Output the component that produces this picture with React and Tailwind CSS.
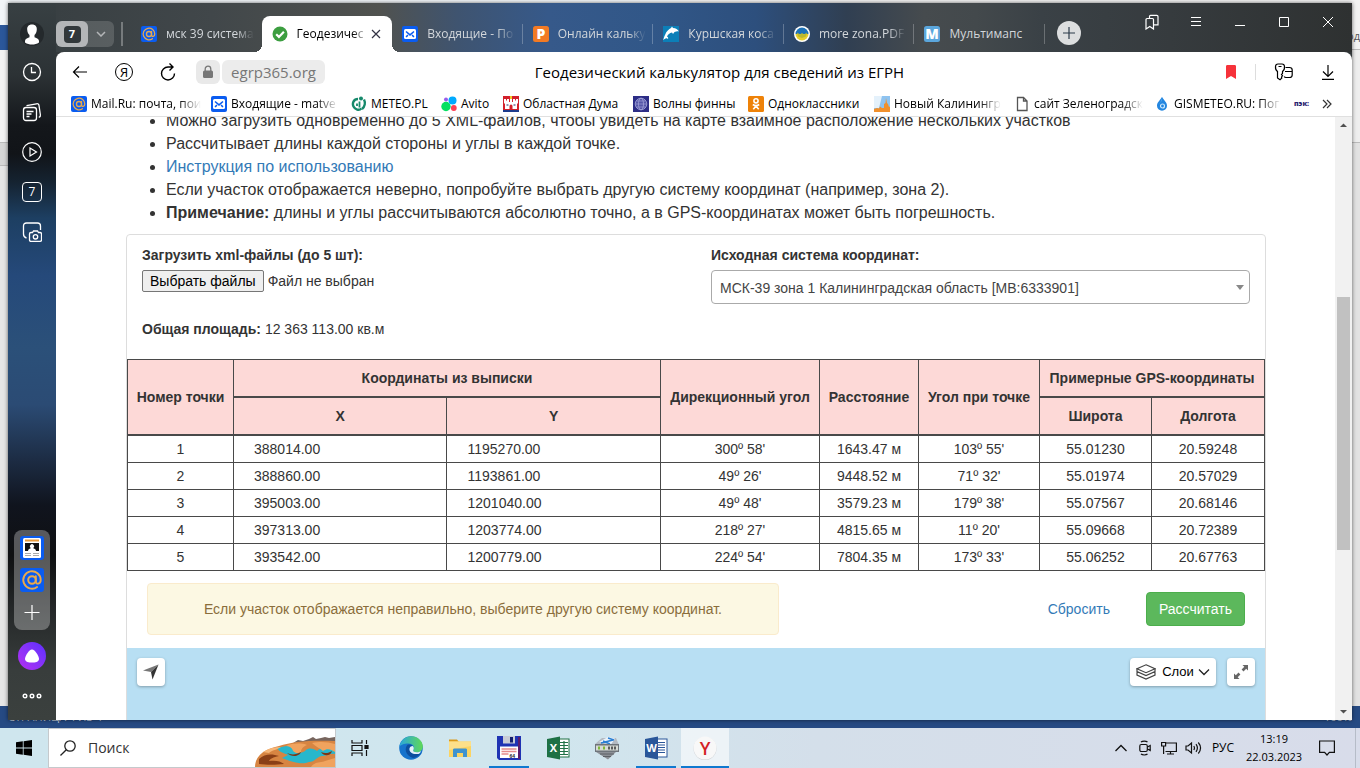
import { useRef, useState } from 'react';

const POINTS = [
  { id: 1, x: '388014.00', y: '1195270.00', dir: "300º 58'", dist: '1643.47 м', angle: "103º 55'", lat: '55.01230', lon: '20.59248' },
  { id: 2, x: '388860.00', y: '1193861.00', dir: "49º 26'", dist: '9448.52 м', angle: "71º 32'", lat: '55.01974', lon: '20.57029' },
  { id: 3, x: '395003.00', y: '1201040.00', dir: "49º 48'", dist: '3579.23 м', angle: "179º 38'", lat: '55.07567', lon: '20.68146' },
  { id: 4, x: '397313.00', y: '1203774.00', dir: "218º 27'", dist: '4815.65 м', angle: "11º 20'", lat: '55.09668', lon: '20.72389' },
  { id: 5, x: '393542.00', y: '1200779.00', dir: "224º 54'", dist: '7804.35 м', angle: "173º 33'", lat: '55.06252', lon: '20.67763' },
];

/* ---------- site icons ---------- */

function MailIcon({ className = 'size-4' }) {
  return (
    <svg viewBox="0 0 24 24" className={className} fill="none">
      <rect width="24" height="24" rx="3" fill="#0a5cf0" />
      <circle cx="12" cy="12" r="3.8" stroke="#e9a94c" strokeWidth="2" />
      <path d="M15.8 8.2v5.4c0 3.2 4.9 2.6 4.9-1.6a8.7 8.7 0 1 0-3.6 7" stroke="#e9a94c" strokeWidth="1.9" strokeLinecap="round" />
    </svg>
  );
}

function InboxIcon() {
  return (
    <svg viewBox="0 0 16 16" className="size-4 shrink-0" fill="none">
      <rect width="16" height="16" rx="2" fill="#0a5cf0" />
      <rect x="2" y="3" width="12" height="10" rx="1.5" fill="#fff" />
      <path d="M4 5.5l4 3.4 4-3.4M4 10.8l2-1.6M12 10.8l-2-1.6" stroke="#0a5cf0" strokeWidth="1.5" />
    </svg>
  );
}

function CheckIcon() {
  return (
    <svg viewBox="0 0 16 16" className="size-4 shrink-0" fill="none">
      <circle cx="8" cy="8" r="7.5" fill="#3c9e40" />
      <path d="M4.2 8.3l2.7 2.6 5-5.2" stroke="#fff" strokeWidth="2.2" />
    </svg>
  );
}

function LetterIcon({ letter, color }) {
  return (
    <svg viewBox="0 0 16 16" className="size-4 shrink-0">
      <rect width="16" height="16" rx="2.5" fill={color} />
      <text x="8" y="13" textAnchor="middle" fontSize="14" fontWeight="800" fontFamily="Open Sans" fill="#fff">{letter}</text>
    </svg>
  );
}

function DolphinIcon() {
  return (
    <svg viewBox="0 0 16 16" className="size-4 shrink-0">
      <rect width="16" height="16" fill="#0c7fb8" />
      <path d="M0 14c1-2 1-3 2-5C3.500 5 6 3 8 2l1-1.500 1 1.500c3 0 4.500 1.500 6 3.500-2-.5-3 .3-4.500.4L10 8 9 6.500C6.500 7 5 8.500 4 10.500c1 .5 1.500 1.500 1 2.500-1-1-2-1-5 1z" fill="#fff" />
    </svg>
  );
}

function ZonaIcon() {
  return (
    <svg viewBox="0 0 16 16" className="size-4 shrink-0">
      <circle cx="8" cy="8" r="8" fill="#fff" />
      <path d="M1.500 8a6.500 6.500 0 0 1 13 0z" fill="#1d72b8" />
      <path d="M1.500 8a6.500 6.500 0 0 0 13 0z" fill="#e8cf2a" />
      <path d="M3 6.500l3 2 2-1.500 2 1.500 3-2-1 4-4 1.500-4-1.500z" fill="#bcb82e" />
    </svg>
  );
}

function MeteoIcon() {
  return (
    <svg viewBox="0 0 16 16" className="size-4 shrink-0" fill="none" stroke="#16896b">
      <path d="M7 3C2.500 3 1 7.500 2.500 10.500S8 15 10.500 12.500" strokeWidth="2.400" />
      <path d="M13 3.500c1.500 3 1 7-2 9.500" strokeWidth="2.400" />
      <path d="M8.500 5.500v6M6 7.500v2.500" strokeWidth="1.800" />
      <circle cx="10" cy="2.500" r="2" fill="#16896b" stroke="none" />
    </svg>
  );
}

function AvitoIcon() {
  return (
    <svg viewBox="0 0 16 16" className="size-4 shrink-0">
      <circle cx="5" cy="10.500" r="4.700" fill="#04e061" />
      <circle cx="11.500" cy="4.500" r="4" fill="#00aaff" />
      <circle cx="12.800" cy="12" r="2.900" fill="#ff4053" />
      <circle cx="5" cy="3.500" r="2" fill="#965eeb" />
    </svg>
  );
}

function DumaIcon() {
  return (
    <svg viewBox="0 0 16 16" className="size-4 shrink-0">
      <rect width="16" height="16" fill="#d3202b" />
      <path d="M1 3h2v1.500h1V3h2v3h1V1h2v5h1V3h2v1.500h1V3h2v4l-1 1v5H2V8L1 7z" fill="#fff" />
      <rect x="7" y="0" width="2" height="3" fill="#f2c928" />
      <path d="M6.500 13v-3a1.500 1.500 0 0 1 3 0v3z" fill="#d3202b" />
      <path d="M0 14h16v2H0z" fill="#1c3b8c" />
      <path d="M3.500 9h2M10.500 9h2" stroke="#1c2c6b" />
    </svg>
  );
}

function WavesIcon() {
  return (
    <svg viewBox="0 0 16 16" className="size-4 shrink-0" fill="none">
      <rect width="16" height="16" fill="#2c2d86" />
      <circle cx="8" cy="8" r="5.800" fill="#5557a8" stroke="#a7a9dc" strokeWidth=".8" />
      <ellipse cx="8" cy="8" rx="2.500" ry="5.800" stroke="#a7a9dc" strokeWidth=".7" />
      <path d="M2.500 8h11M3.500 5h9M3.500 11h9" stroke="#a7a9dc" strokeWidth=".6" />
    </svg>
  );
}

function OkIcon() {
  return (
    <svg viewBox="0 0 16 16" className="size-4 shrink-0" fill="none" stroke="#fff" strokeWidth="1.600">
      <rect width="16" height="16" rx="1.500" fill="#ee8208" stroke="none" />
      <circle cx="8" cy="4.800" r="2.100" />
      <path d="M4.800 8.500c2 1.400 4.400 1.400 6.400 0M8 10l-2.700 3.200M8 10l2.700 3.200" />
    </svg>
  );
}

function KaliningradIcon() {
  return (
    <svg viewBox="0 0 16 16" className="size-4 shrink-0">
      <rect width="16" height="16" fill="#8ec3f0" />
      <path d="M0 0h8L5 12H0z" fill="#e4f1fb" />
      <path d="M0 13l3-1 2 .5 1-2 2 1.500h2V8l1.500-1L12 2l1 5 1 1 1 3 1-.5V16H0z" fill="#f0902c" />
    </svg>
  );
}

function PageIcon() {
  return (
    <svg viewBox="0 0 16 16" className="size-4 shrink-0" fill="none" stroke="#555" strokeWidth="1.300">
      <path d="M3.500 1.500h6l3.500 3.500v9.500H3.500zM9.500 1.500V5H13" />
    </svg>
  );
}

function DropIcon() {
  return (
    <svg viewBox="0 0 16 16" className="size-4 shrink-0" fill="none">
      <path d="M8 .8c1 3 5 5 5 9a5 5 0 0 1-10 0c0-4 4-6 5-9z" fill="#2386e0" />
      <path d="M8 3c.5 2-2.500 4-3.500 6 .5-2 3-3 3.500-6z" fill="#b5ddfa" />
      <circle cx="8.500" cy="10" r="2" stroke="#cbe8fc" strokeWidth="1.200" />
    </svg>
  );
}

/* ---------- browser sidebar ---------- */

function SideButton({ label, children }) {
  return (
    <button type="button" aria-label={label} className="flex h-10 w-full items-center justify-center">
      {children}
    </button>
  );
}

function Sidebar() {
  return (
    <aside className="flex w-12 shrink-0 flex-col items-center bg-[linear-gradient(180deg,#384043_0%,#2c3235_10%,#14171b_17%,#111418_21%,#152331_25%,#1d3f62_30%,#25497a_38%,#2b5079_48%,#2b4b74_56%,#1c2b42_64%,#10141e_70%,#0f1012_77%,#232627_84%,#383d3c_93%,#3b403e_100%)] pt-[13px] text-white">
      <button type="button" aria-label="Профиль" className="flex h-9 w-full items-center justify-center">
        <svg viewBox="0 0 24 24" className="size-6">
          <circle cx="12" cy="12" r="12" fill="#24292c" />
          <path d="M12 2.500c3.500 0 5 2.200 4.800 5-.1 2.400-.9 4.500-2.300 5.500v2.300c2.500 1 4.500 1.700 4.500 3.700v1.500c-2 1.500-4.500 2-7 2s-5-.5-7-2V19c0-2 2-2.700 4.500-3.700V13C8.100 12 7.300 9.900 7.200 7.500c-.2-2.800 1.300-5 4.800-5z" fill="#fff" />
        </svg>
      </button>
      <SideButton label="История">
        <svg viewBox="0 0 20 20" className="size-5" fill="none" stroke="currentColor" strokeWidth="1.300">
          <circle cx="10" cy="10" r="8.500" />
          <path d="M9.500 5v5.500H14" />
        </svg>
      </SideButton>
      <SideButton label="Коллекции">
        <svg viewBox="0 0 20 20" className="size-5" fill="none" stroke="currentColor" strokeWidth="1.300">
          <rect x="1.500" y="5.500" width="13" height="13" rx="2.500" />
          <path d="M4.500 9.500h7M4.500 12h5M4.500 14.500h3M4.500 3.700l10-1.900c1.500-.3 2.300.3 2.500 1.700l1.400 9.500c.2 1.300-.4 2-1.600 2.300" />
        </svg>
      </SideButton>
      <SideButton label="Видео">
        <svg viewBox="0 0 20 20" className="size-5" fill="none" stroke="currentColor" strokeWidth="1.200">
          <circle cx="10" cy="10" r="9.300" />
          <path d="M8 6v8l6.500-4z" />
        </svg>
      </SideButton>
      <SideButton label="Вкладки">
        <span className="flex size-5 items-center justify-center rounded border border-white text-xs">7</span>
      </SideButton>
      <SideButton label="Скриншот">
        <svg viewBox="0 0 20 20" className="size-5" fill="none" stroke="currentColor" strokeWidth="1.300">
          <path d="M4.500 16C2.500 15.500 1.500 14 1.500 12V4c0-2 1-3 3-3h11c2 0 3 1 3 3v4" />
          <path d="M7.500 12c0-1 .5-1.500 1.500-1.500h1.500L11.500 9h4l1 1.500H18c1 0 1.500.5 1.500 1.500v6c0 .8-.5 1.300-1.500 1.300H9c-1 0-1.500-.5-1.500-1.300z" />
          <circle cx="13.500" cy="14.800" r="2.200" />
        </svg>
      </SideButton>

      <div className="mt-auto mb-1.5 flex w-9 flex-col items-center gap-2 rounded-lg bg-white/30 py-1.5">
        <a href="#news" aria-label="Новости">
          <svg viewBox="0 0 24 24" className="size-6">
            <rect width="24" height="24" rx="3" fill="#0a5cf0" />
            <rect x="3" y="2" width="18" height="20" rx="1.500" fill="#fff" />
            <path d="M5 4.500h14" stroke="#e99b3c" strokeWidth="2" />
            <path d="M5 7h14v8H5z" fill="#111" />
            <path d="M8 15c0-2 2-2.500 3-3a2 2 0 1 1 2 0c1 .5 3 1 3 3z" fill="#fff" />
            <path d="M5 17.500h6M13 17.500h6M5 19.500h6M13 19.500h6" stroke="#aaa" />
          </svg>
        </a>
        <a href="#mail" aria-label="Почта">
          <MailIcon className="size-6" />
        </a>
        <button type="button" aria-label="Добавить">
          <svg viewBox="0 0 24 24" className="size-6" stroke="currentColor" strokeWidth="1.200">
            <path d="M4.500 12.500h15M12 5v15" />
          </svg>
        </button>
      </div>
      <SideButton label="Алиса">
        <span className="flex size-7 items-center justify-center rounded-full bg-linear-to-tr from-[#b52bf2] to-[#5b2cff]">
          <svg viewBox="0 0 16 16" className="size-4" fill="#fff">
            <path d="M8 1.500c3 0 7 6.500 7 9.500S11 14.500 8 14.500 1 14 1 11s4-9.500 7-9.500z" />
          </svg>
        </span>
      </SideButton>
      <SideButton label="Ещё">
        <svg viewBox="0 0 20 8" className="h-2 w-5" fill="none" stroke="currentColor" strokeWidth="1.400">
          <circle cx="3" cy="4" r="1.800" />
          <circle cx="10" cy="4" r="1.800" />
          <circle cx="17" cy="4" r="1.800" />
        </svg>
      </SideButton>
      <div className="h-1 shrink-0" />
    </aside>
  );
}

/* ---------- tabs, toolbar, bookmarks ---------- */

const FADE = '[mask-image:linear-gradient(90deg,#000_80%,transparent)]';

function Tab({ icon, title, fade = true, last }) {
  return (
    <a href="#tab" className="relative flex min-w-0 flex-1 items-center gap-[9px] pr-2 pl-2.5 text-[#d3d7db]">
      {icon}
      <span className={`flex-1 whitespace-nowrap ${fade ? FADE : ''}`}>{title}</span>
      {!last && <span className="absolute top-2 right-0 h-5 w-px bg-white/25" />}
    </a>
  );
}

function TitleBar() {
  return (
    <header className="flex h-[49px] shrink-0 items-start bg-[linear-gradient(90deg,#394043_0%,#41474a_12%,#50524f_25%,#3f5470_31%,#36598a_38%,#315788_46%,#2d4f7d_54%,#303f52_61%,#464b4e_67%,#43494c_71%,#3a4146_76%,#363b3e_86%,#2e3131_100%)]">
      <div className="mt-[18px] flex h-[26px] w-[58px] shrink-0 rounded-md bg-white/15">
        <button type="button" aria-label="Группа вкладок" className="flex w-8 items-center justify-center rounded-md bg-[#b4b6b8]">
          <span className="flex size-[17px] items-center justify-center rounded bg-[#32383b] text-[11px] font-bold text-white">7</span>
        </button>
        <button type="button" aria-label="Список групп" className="flex flex-1 items-center justify-center text-[#b4b6b8]">
          <svg viewBox="0 0 10 6" className="h-1.5 w-2.5" fill="none" stroke="currentColor" strokeWidth="1.500">
            <path d="M1 1l4 4 4-4" />
          </svg>
        </button>
      </div>
      <span className="mt-[19px] ml-[7px] h-6 w-0.5 bg-white/30" />
      <nav className="mt-[13px] ml-2 flex h-9 w-[914px] text-xs">
        <Tab icon={<MailIcon className="size-4 shrink-0" />} title="мск 39 система" last />
        <div className="relative flex min-w-0 flex-1 items-center gap-[9px] rounded-t-lg bg-white pr-2 pl-2.5 text-black">
          <span className="absolute bottom-0 -left-2 size-2 bg-[radial-gradient(circle_at_0_0,transparent_8px,#fff_8px)]" />
          <span className="absolute -right-2 bottom-0 size-2 bg-[radial-gradient(circle_at_100%_0,transparent_8px,#fff_8px)]" />
          <CheckIcon />
          <a href="#tab" className={`flex-1 whitespace-nowrap ${FADE}`}>Геодезичес</a>
          <button type="button" aria-label="Закрыть вкладку" className="-ml-2">
            <svg viewBox="0 0 16 16" className="size-4" stroke="#334" strokeWidth="1.200">
              <path d="M4 4l8 8M12 4l-8 8" />
            </svg>
          </button>
        </div>
        <Tab icon={<InboxIcon />} title="Входящие - По" />
        <Tab icon={<LetterIcon letter="P" color="#f27a24" />} title="Онлайн кальку" />
        <Tab icon={<DolphinIcon />} title="Куршская коса" />
        <Tab icon={<ZonaIcon />} title="more zona.PDF" />
        <Tab icon={<LetterIcon letter="M" color="#5ba6dc" />} title="Мультимапс" fade={false} />
      </nav>
      <button type="button" aria-label="Новая вкладка" className="mt-[18px] ml-3 flex size-6 items-center justify-center rounded-full bg-[#dcdedf]">
        <svg viewBox="0 0 12 12" className="size-3" stroke="#2b3a4a" strokeWidth="1.200">
          <path d="M0 6h12M6 0v12" />
        </svg>
      </button>
      <div className="mr-0.5 ml-auto flex h-[38px] text-white">
        <button type="button" aria-label="Панель закладок" className="flex w-11 items-center justify-center">
          <svg viewBox="0 0 14 16" className="h-4 w-3.5" fill="none" stroke="currentColor" strokeWidth="1.200">
            <path d="M1 5.500c0-.8.400-1 1-1h5.500c.7 0 1 .3 1 1V15l-3.700-2.500L1 15zM4.500 4.500V2.500c0-.8.300-1.200 1-1.200h6.300c.8 0 1.200.4 1.200 1.200v8.300H8.500" />
          </svg>
        </button>
        <button type="button" aria-label="Меню" className="flex w-11 items-center justify-center">
          <svg viewBox="0 0 10 10" className="size-2.5" stroke="currentColor"><path d="M0 .5h10M0 4.500h10M0 8.500h10" /></svg>
        </button>
        <button type="button" aria-label="Свернуть" className="flex w-11 items-center justify-center">
          <svg viewBox="0 0 10 10" className="size-2.5" stroke="currentColor"><path d="M0 8.500h10" /></svg>
        </button>
        <button type="button" aria-label="Развернуть" className="flex w-11 items-center justify-center">
          <svg viewBox="0 0 10 10" className="size-2.5" fill="none" stroke="currentColor"><path d="M.5.5h9v9h-9z" /></svg>
        </button>
        <button type="button" aria-label="Закрыть" className="flex w-11 items-center justify-center">
          <svg viewBox="0 0 10 10" className="size-2.5" stroke="currentColor"><path d="M0 0l10 10M10 0L0 10" /></svg>
        </button>
      </div>
    </header>
  );
}

function Toolbar() {
  return (
    <div className="flex h-10 shrink-0 items-center px-0.5 text-black">
      <button type="button" aria-label="Назад" className="flex w-11 justify-center">
        <svg viewBox="0 0 16 16" className="size-4" fill="none" stroke="currentColor" strokeWidth="1.200">
          <path d="M1.500 8h13.500M7 2.500L1.500 8 7 13.500" />
        </svg>
      </button>
      <button type="button" aria-label="Яндекс" className="flex w-11 justify-center">
        <span className="flex size-[18px] items-center justify-center rounded-full border border-black text-[13px] leading-none">Я</span>
      </button>
      <button type="button" aria-label="Обновить" className="flex w-11 justify-center">
        <svg viewBox="0 0 16 18" className="h-[18px] w-4" fill="none" stroke="currentColor" strokeWidth="1.400">
          <path d="M14.500 10.500A6.500 6.500 0 1 1 8 4h4.500M9.500.5L13 4 9.500 7.500" />
        </svg>
      </button>
      <div className="ml-1.5 flex gap-0.5">
        <span className="flex h-6 w-6 items-center justify-center rounded-md bg-[#e9e9e9]">
          <svg viewBox="0 0 12 14" className="h-3.5 w-3" fill="none">
            <path d="M3.200 6V4a2.800 2.800 0 0 1 5.600 0v2" stroke="#777" strokeWidth="1.300" />
            <rect x="1" y="5.500" width="10" height="7.500" rx="1.500" fill="#777" />
          </svg>
        </span>
        <button type="button" className="h-6 w-[103px] rounded-md bg-[#ececec] text-center text-[15px] leading-6 text-[#777]">egrp365.org</button>
      </div>
      <div className="mr-28 flex-1 overflow-hidden text-center text-[15px] whitespace-nowrap">
        Геодезический калькулятор для сведений из ЕГРН
      </div>
      <button type="button" aria-label="В закладках">
        <svg viewBox="0 0 10 14" className="h-3.5 w-2.5" fill="#f6323a">
          <path d="M0 1.500C0 .5.5 0 1.500 0h7C9.500 0 10 .5 10 1.500V14l-5-3-5 3z" />
        </svg>
      </button>
      <span className="ml-[19px] h-4 w-px bg-[#ddd]" />
      <button type="button" aria-label="Пароли и карты" className="ml-1.5 flex w-11 justify-center">
        <svg viewBox="0 0 20 18" className="h-[18px] w-5" fill="none" stroke="currentColor" strokeWidth="1.200">
          <path d="M3.500 8.500C1.800 7.300 1.300 5.500 1.500 3.500 1.600 1.700 2.300 1 4 1h4c1.700 0 2.400.7 2.500 2.500.2 2-.3 3.800-2 5v2l-1 1 1 1.200-1 1.300.3 1L6 16.800 3.500 15z" />
          <path d="M4.500 3.500h3M11.500 4.500h4c1.800 0 2.700.8 2.700 2.500v5c0 1.700-.9 2.500-2.700 2.500h-3.500c-1 0-1.500-.3-1.800-1M11 8.500h7" />
        </svg>
      </button>
      <button type="button" aria-label="Загрузки" className="flex w-11 justify-center">
        <svg viewBox="0 0 14 16" className="h-4 w-3.5" fill="none" stroke="currentColor" strokeWidth="1.200">
          <path d="M7 1v11M2 7.500L7 12.500l5-5M1 15.400h12" />
        </svg>
      </button>
    </div>
  );
}

function Bookmark({ icon, title, width, fade }) {
  return (
    <a href="#bookmark" className={`flex shrink-0 items-center gap-1 ${width}`}>
      {icon}
      <span className={`flex-1 whitespace-nowrap ${fade ? FADE : ''}`}>{title}</span>
    </a>
  );
}

function BookmarksBar() {
  return (
    <nav className="flex h-[25px] shrink-0 items-center gap-[13px] overflow-hidden border-b border-[#e0e0e0] pl-[15px] text-xs text-black">
      <Bookmark icon={<MailIcon className="size-4 shrink-0" />} title="Mail.Ru: почта, пои" width="w-[127px]" fade />
      <Bookmark icon={<InboxIcon />} title="Входящие - matve" width="w-[127px]" fade />
      <Bookmark icon={<MeteoIcon />} title="METEO.PL" width="w-[77px]" />
      <Bookmark icon={<AvitoIcon />} title="Avito" width="w-[49px]" />
      <Bookmark icon={<DumaIcon />} title="Областная Дума" width="w-[117px]" />
      <Bookmark icon={<WavesIcon />} title="Волны финны" width="w-[102px]" />
      <Bookmark icon={<OkIcon />} title="Одноклассники" width="w-[113px]" />
      <Bookmark icon={<KaliningradIcon />} title="Новый Калинингр" width="w-[127px]" fade />
      <Bookmark icon={<PageIcon />} title="сайт Зеленоградск" width="w-[127px]" fade />
      <Bookmark icon={<DropIcon />} title="GISMETEO.RU: Пог" width="w-[127px]" fade />
      <a href="#bookmark" className="text-[7px] font-extrabold text-[#2a2470]">пэк:</a>
      <button type="button" aria-label="Все закладки">
        <svg viewBox="0 0 10 10" className="size-2.5" fill="none" stroke="#333" strokeWidth="1.200">
          <path d="M1 1l4 4-4 4M5 1l4 4-4 4" />
        </svg>
      </button>
    </nav>
  );
}

/* ---------- calculator page ---------- */

function UploadForm() {
  const inputRef = useRef(null);
  const [fileName, setFileName] = useState('');

  return (
    <div className="grid grid-cols-2 pt-2.5">
      <div className="px-[15px]">
        <label htmlFor="files" className="block font-bold">Загрузить xml-файлы (до 5 шт):</label>
        <input
          id="files"
          ref={inputRef}
          type="file"
          multiple
          className="hidden"
          onChange={(e) => setFileName(e.target.files[0]?.name || '')}
        />
        <div className="mt-[5px] flex items-center gap-1">
          <button
            type="button"
            onClick={() => inputRef.current.click()}
            className="h-[22px] rounded-xs border border-[#767676] bg-[#efefef] px-[7px] leading-5 text-black"
          >
            Выбрать файлы
          </button>
          <span>{fileName || 'Файл не выбран'}</span>
        </div>
      </div>
      <div className="px-[15px]">
        <label htmlFor="system" className="block font-bold">Исходная система координат:</label>
        <div className="relative mt-[5px]">
          <select id="system" className="h-[34px] w-full appearance-none rounded border border-[#aaa] bg-white px-2 pt-0.5 text-[#444]">
            <option>МСК-39 зона 1 Калининградская область [МВ:6333901]</option>
            <option>МСК-39 зона 2 Калининградская область</option>
          </select>
          <svg viewBox="0 0 8 5" className="pointer-events-none absolute top-[15px] right-1.5 h-[5px] w-2" fill="#888">
            <path d="M0 0h8L4 5z" />
          </svg>
        </div>
      </div>
    </div>
  );
}

function PointsTable() {
  const head = 'border border-[#494949] px-0 py-2 font-bold';
  const sub = 'border border-t-2 border-[#494949] px-0 py-2 font-bold';
  const cell = 'border border-[#494949] py-[3px] text-center';
  return (
    <table className="w-full table-fixed border-collapse leading-5">
      <colgroup>
        <col className="w-[106px]" />
        <col />
        <col />
        <col className="w-[159px]" />
        <col className="w-[99px]" />
        <col className="w-[121px]" />
        <col className="w-[112px]" />
        <col className="w-[113px]" />
      </colgroup>
      <thead className="border-b-2 border-[#494949] bg-[#fdd9d7]">
        <tr>
          <th rowSpan={2} className={head}>Номер точки</th>
          <th colSpan={2} className={head}>Координаты из выписки</th>
          <th rowSpan={2} className={head}>Дирекционный угол</th>
          <th rowSpan={2} className={head}>Расстояние</th>
          <th rowSpan={2} className={head}>Угол при точке</th>
          <th colSpan={2} className={head}>Примерные GPS-координаты</th>
        </tr>
        <tr>
          <th className={sub}>X</th>
          <th className={sub}>Y</th>
          <th className={sub}>Широта</th>
          <th className={sub}>Долгота</th>
        </tr>
      </thead>
      <tbody>
        {POINTS.map((p) => (
          <tr key={p.id}>
            <td className={cell}>{p.id}</td>
            <td className="border border-[#494949] py-[3px] pl-5">{p.x}</td>
            <td className="border border-[#494949] py-[3px] pl-5">{p.y}</td>
            <td className={cell}>{p.dir}</td>
            <td className={cell}>{p.dist}</td>
            <td className={cell}>{p.angle}</td>
            <td className={cell}>{p.lat}</td>
            <td className={cell}>{p.lon}</td>
          </tr>
        ))}
      </tbody>
    </table>
  );
}

function MapView() {
  const control = 'flex h-7 items-center justify-center rounded-sm bg-white shadow-[0_1px_3px_rgba(0,0,0,0.3)]';
  return (
    <div className="flex h-[450px] items-start bg-[#b8dff3] p-2.5">
      <button type="button" aria-label="Моё местоположение" className={`w-7 ${control}`}>
        <svg viewBox="0 0 16 16" className="size-4">
          <path d="M15.500.5L0 6.500l8 1.500z" fill="#777" />
          <path d="M15.500.5L8 8l1.500 7.500z" fill="#333" />
        </svg>
      </button>
      <button type="button" className={`ml-auto w-[86px] gap-1 text-[13px] text-black ${control}`}>
        <svg viewBox="0 0 20 16" className="mr-0.5 h-4 w-5" fill="none" stroke="#444" strokeWidth="1.200">
          <path d="M10 .8l9 3.900-9 4-9-4z" />
          <path d="M1 4.700v2.800l9 4 9-4V4.700M1 8.200v2.800l9 4 9-4V8.200" />
        </svg>
        Слои
        <svg viewBox="0 0 12 8" className="h-2 w-3" fill="none" stroke="#222" strokeWidth="1.300">
          <path d="M1 1.500l5 5 5-5" />
        </svg>
      </button>
      <button type="button" aria-label="На весь экран" className={`ml-[11px] w-7 ${control}`}>
        <svg viewBox="0 0 14 14" className="size-3.5" fill="#666">
          <path d="M8.500 0H14v5.500l-1.800-1.800-2.700 2.700-1.900-1.900 2.700-2.700zM5.500 14H0V8.500l1.800 1.800 2.700-2.700 1.900 1.900-2.700 2.700z" />
        </svg>
      </button>
    </div>
  );
}

function Page() {
  return (
    <div className="flex min-h-0 flex-1 overflow-hidden">
      <main className="min-w-0 flex-1 overflow-hidden bg-white pr-[69px] pl-[70px] font-['Liberation_Sans',Arial,sans-serif] text-sm leading-5 text-[#333]">
        <ul className="-mt-2 mb-2.5 list-disc pl-10 text-base leading-[23px]">
          <li>Можно загрузить одновременно до 5 XML-файлов, чтобы увидеть на карте взаимное расположение нескольких участков</li>
          <li>Рассчитывает длины каждой стороны и углы в каждой точке.</li>
          <li><a href="#help" className="text-[#337ab7]">Инструкция по использованию</a></li>
          <li>Если участок отображается неверно, попробуйте выбрать другую систему координат (например, зона 2).</li>
          <li><b>Примечание:</b> длины и углы рассчитываются абсолютно точно, а в GPS-координатах может быть погрешность.</li>
        </ul>
        <section className="rounded border border-[#ddd]">
          <UploadForm />
          <p className="mt-[15px] mb-5 px-[15px]"><b>Общая площадь:</b> 12 363 113.00 кв.м</p>
          <PointsTable />
          <div className="mt-3 mb-[13px] grid grid-cols-12 items-center">
            <div className="col-span-7 pr-3 pl-5">
              <div className="rounded border border-[#faebcc] bg-[#fcf8e3] p-[15px] text-center text-[#8a6d3b]">
                Если участок отображается неправильно, выберите другую систему координат.
              </div>
            </div>
            <div className="col-span-5 flex items-center justify-end gap-9 pr-5">
              <button type="reset" className="text-[#337ab7]">Сбросить</button>
              <button type="submit" className="h-[34px] rounded border border-[#4cae4c] bg-[#5cb85c] px-3 text-white">Рассчитать</button>
            </div>
          </div>
          <MapView />
        </section>
      </main>
      <div className="flex w-[17px] shrink-0 flex-col items-center bg-[#f1f1f1]">
        <svg viewBox="0 0 17 17" className="size-[17px]" fill="#505050"><path d="M5 10h7L8.500 6.500z" /></svg>
        <div className="flex w-full flex-1 flex-col items-center">
          <div className="grow-[163]" />
          <div className="w-[13px] grow-[253] bg-[#c1c1c1]" />
          <div className="grow-[153]" />
        </div>
        <svg viewBox="0 0 17 17" className="size-[17px]" fill="#505050"><path d="M5 7h7l-3.500 3.500z" /></svg>
      </div>
    </div>
  );
}

/* ---------- desktop ---------- */

function Backdrop() {
  return (
    <div className="absolute inset-0 flex flex-col bg-[#e6e6e6] text-[11px] text-[#555]">
      <div className="flex min-h-0 flex-1">
        <div className="flex flex-1 flex-col">
          <div className="h-[25px] bg-[#f2f6f9]" />
          <div className="h-[25px] bg-[#2b579a]" />
          <div className="h-[92px] bg-[#f3f3f3]" />
          <div className="h-6 border-y border-[#bbb] bg-[#d6d6d6]" />
        </div>
        <div className="flex flex-1 flex-col items-end">
          <div className="h-[50px] w-full border-b border-[#bbb] bg-[#f3f3f3] pt-7 text-right">Вход</div>
          <div className="h-[93px] w-full border-b border-[#bbb] bg-[#eee]" />
          <div className="w-full flex-1 bg-[#e2e2e2]" />
        </div>
      </div>
      <div className="flex h-[22px] items-center justify-between bg-[#264a83] px-2 text-[#c3cee0]">
        <span>СТРАНИЦА 4 ИЗ 4</span>
        <span>100%</span>
      </div>
    </div>
  );
}

function TaskButton({ label, open, active, children }) {
  return (
    <button
      type="button"
      aria-label={label}
      className={`flex w-12 flex-col items-center ${active ? 'bg-white/60' : ''}`}
    >
      <span className="flex flex-1 items-center pt-0.5">{children}</span>
      <span className={`h-0.5 ${active ? 'w-full' : 'w-10'} ${open ? 'bg-[#0f79d0]' : ''}`} />
    </button>
  );
}

function OfficeIcon({ letter, color, sheet }) {
  return (
    <svg viewBox="0 0 24 24" className="size-6">
      <rect x="12" y="3" width="11" height="18" fill="#fff" stroke={color} />
      {sheet
        ? <path d="M14 6.500h8M14 9.500h8M14 12.500h8M14 15.500h8M14 18.500h8M18 5v14" stroke={color} strokeWidth="1.200" />
        : <path d="M14 6.500h7M14 9h7M14 11.500h7M14 14h7M14 16.500h7" stroke={color} strokeWidth="1.200" />}
      <path d="M1 3l13-2.500v23L1 21z" fill={color} />
      <text x="7.500" y="16" textAnchor="middle" fontSize="11" fontWeight="700" fontFamily="Open Sans" fill="#fff">{letter}</text>
    </svg>
  );
}

function Taskbar() {
  return (
    <footer className="flex h-10 shrink-0 bg-[linear-gradient(90deg,#cfe6ee_0%,#d0e6ee_40%,#d4dfea_60%,#d8dcea_100%)] text-black">
      <button type="button" aria-label="Пуск" className="flex w-12 items-center justify-center">
        <svg viewBox="0 0 16 16" className="size-4">
          <path d="M0 2.300l6.800-1v6.300H0zM7.600 1.200L16 0v7.600H7.600zM0 8.400h6.800v6.300l-6.800-1zM7.600 8.400H16V16l-8.400-1.200z" />
        </svg>
      </button>
      <form className="flex w-72 items-center overflow-hidden border border-[#c5c9cc] bg-white pl-[11px]">
        <svg viewBox="0 0 16 16" className="size-4 shrink-0" fill="none" stroke="#222" strokeWidth="1.300">
          <circle cx="10" cy="6" r="5.200" />
          <path d="M6.300 9.700L.5 15.500" />
        </svg>
        <input type="search" aria-label="Поиск" placeholder="Поиск" className="ml-3 min-w-0 flex-1 bg-transparent text-sm outline-none placeholder:text-[#333]" />
        <svg viewBox="0 0 80 30" className="h-[30px] w-20 shrink-0 self-end">
          <path d="M38 6l5-3 5 1 6-2 4-2 3 2 5-1 4-1 4 1 6-1v8c-14-2-28-3-42-2z" fill="#77655e" />
          <path d="M0 30C0 19 9 12 24 9c14-5 34-6 56-5v26z" fill="#d78542" />
          <path d="M22 11c8-2 14-3 22-3l-3 6c3 3 7 2 10-1 4-3 8-1 11 1 4-4 8-4 18-2v5c-5-1-8 2-12 2-5-1-8 6-14 6-7 3-14 0-19-1l-8-3 6-3c-4-2-9-3-11-7z" fill="#27b7cc" />
          <path d="M31 9c6-3 16-3 21-1-5 2-6 5-6 7-3 2-6 1-8-1 0-2-3-5-7-5zM57 6c9-2 16-1 23 1v8c-4-3-8-4-12-1-3-3-7-4-11-8z" fill="#f0a35e" />
          <path d="M4 22c6-6 14-5 20-3-6 1-9 3-10 5 6-1 12 0 15 3-8 1-18 1-25 0z" fill="#8a3f16" />
          <path d="M8 15c6-4 12-5 18-5-4 3-9 3-12 6z" fill="#f5b577" />
          <path d="M32 16c4 2 9 2 14-1-1 4-9 6-14 1zM66 15c4 2 8 1 11-1-1 5-8 6-11 1z" fill="#7b3715" />
          <path d="M56 30c4-6 10-4 14-6l10-3v9z" fill="#f0a35e" />
        </svg>
      </form>
      <TaskButton label="Представление задач">
        <svg viewBox="0 0 18 18" className="size-[18px]" fill="none" stroke="#111" strokeWidth="1.200">
          <path d="M1 1v3h10V1M1 17v-3h10v3M1 6.500h10v5H1zM15.500 1v4M15.500 11v6" />
          <path d="M14 6.500h3v3h-3z" fill="#111" />
        </svg>
      </TaskButton>
      <div className="ml-[3px] flex gap-px">
        <TaskButton label="Edge">
          <svg viewBox="0 0 24 24" className="size-6">
            <defs>
              <linearGradient id="edgeTop" x1="0" x2="1"><stop offset="0" stopColor="#2aa6dd" /><stop offset="1" stopColor="#5fd957" /></linearGradient>
            </defs>
            <circle cx="12" cy="12" r="11.800" fill="#1673cc" />
            <path d="M.3 11C1.500 4 6.500.2 12 .2c7 0 11.800 5 11.800 10 0 4-3 6-6 6s-4.300-1.200-3.500-2.300c2-3-.5-6.400-5-6.400C5 7.500 1.500 9 .3 11z" fill="url(#edgeTop)" />
            <path d="M9 8.500c-4 3-3 11 5 13.500 3-.3 6-2 8-5-7 3-12.500-1-11.500-4.500.6-1.800 2-2.500 3.300-2.500-1-1.300-3-1.800-4.800-1.500z" fill="#0d4f9e" />
            <path d="M14.300 13.900c-.8 1.100.5 2.300 3.500 2.300 1.500 0 3-.5 4-1.300-.2 2-1.500 3-3.500 3.200-5 .3-8.300-2.200-7.800-5.600.4-1.800 2-2.500 3.300-2.500 1.200 1.200 1.300 2.700.5 3.900z" fill="#e4f1f6" />
          </svg>
        </TaskButton>
        <TaskButton label="Проводник">
          <svg viewBox="0 0 22 20" className="h-5 w-[22px]">
            <path d="M0 1.500h8l2 2.500H0z" fill="#d99a1c" />
            <path d="M0 3.500h22V19H0z" fill="#fcd462" />
            <path d="M0 3.500h22V8L0 12z" fill="#fde08a" />
            <path d="M4 19v-7c0-1 .5-1.500 1.500-1.500h11c1 0 1.500.5 1.500 1.500v7h-4v-4H8v4z" fill="#3f93cf" />
          </svg>
        </TaskButton>
        <TaskButton label="Сохранение" open>
          <svg viewBox="0 0 24 24" className="size-6">
            <path d="M0 0h24v24H2l-2-2z" fill="#1f33b3" />
            <path d="M21 1h2v22h-2z" fill="#5a1d6e" />
            <path d="M6 0h12v7.500H6z" fill="#c8ccd6" />
            <path d="M13 1h3v5.500h-3z" fill="#13206e" />
            <path d="M3 10.500h18V22H3z" fill="#fff" />
            <path d="M4.500 13h15M4.500 15.500h15M4.500 18h7" stroke="#e58b8b" strokeWidth="1.300" />
            <text x="12.500" y="21.500" fontSize="5" fontWeight="700" fontFamily="Liberation Sans" fill="#222">64</text>
          </svg>
        </TaskButton>
        <TaskButton label="Excel"><OfficeIcon letter="X" color="#1e7145" sheet /></TaskButton>
        <TaskButton label="Сканер">
          <svg viewBox="0 0 24 24" className="size-6">
            <path d="M1 16l8-2 13 1-9 8.500z" fill="#8c9096" />
            <path d="M0 8l7-6h14l3 7-10 3z" fill="#b4bac2" />
            <path d="M4 6l9-5 7 1.500-4 6z" fill="#e9f2fb" />
            <path d="M8 5l7 3M13 2l6 2M6 7l12-3" stroke="#2a7fd4" strokeWidth="1.400" />
            <path d="M0 8h24v8H0z" fill="#6f757b" />
            <path d="M1 9.500h22v5H1z" fill="#d7dbd5" />
            <path d="M3 10.500h2v3H3zM8 10.500h2v3H8z" fill="#7fb83a" />
            <path d="M14 10.500v3M17 10.500v3M20 10.500v3" stroke="#333" strokeWidth="1.500" />
            <path d="M5 18h14M8 20.500h8" stroke="#5d6166" />
          </svg>
        </TaskButton>
        <TaskButton label="Word" open><OfficeIcon letter="W" color="#2a5699" /></TaskButton>
        <TaskButton label="Яндекс Браузер" open active>
          <svg viewBox="0 0 24 24" className="size-6">
            <circle cx="12" cy="12.500" r="11.500" fill="#c9ccd0" />
            <circle cx="12" cy="12" r="11.500" fill="#f8f8f8" />
            <text x="12" y="18.500" textAnchor="middle" fontSize="18" fontWeight="600" fontFamily="Open Sans" fill="#d41f26">Y</text>
          </svg>
        </TaskButton>
      </div>

      <div className="ml-auto flex items-center">
        <button type="button" aria-label="Скрытые значки" className="flex w-6 justify-center">
          <svg viewBox="0 0 12 8" className="h-2 w-3" fill="none" stroke="#111" strokeWidth="1.300"><path d="M.5 7L6 1.500 11.500 7" /></svg>
        </button>
        <button type="button" aria-label="Камера" className="flex w-6 justify-center">
          <svg viewBox="0 0 12 16" className="h-4 w-3" fill="none" stroke="#111" strokeWidth="1.200">
            <rect x=".8" y="4.500" width="7.500" height="7" rx="1.500" />
            <path d="M8.500 7l2.700-1.500v5L8.500 9M2 2c1.500-1.300 5-1.300 6.500 0M2 14c1.500 1.300 5 1.300 6.500 0" />
          </svg>
        </button>
        <button type="button" aria-label="Сеть" className="flex w-6 justify-center">
          <svg viewBox="0 0 16 14" className="h-3.5 w-4" fill="none" stroke="#111" strokeWidth="1.200">
            <path d="M5 2h10.400v8.500H4.500M.6 1.500h4v3.500h-4zM2.600 5v8M6 13h7M9.500 10.500V13" />
          </svg>
        </button>
        <button type="button" aria-label="Громкость" className="flex w-6 justify-center">
          <svg viewBox="0 0 17 14" className="h-3.5 w-[17px]" fill="none" stroke="#111" strokeWidth="1.200">
            <path d="M1 5v4h2l3.500 3V2L3 5zM8.800 5c.8 1.200.8 2.800 0 4M11 3.200c1.700 2.300 1.700 5.300 0 7.600M13.300 1.500c2.700 3.300 2.700 7.700 0 11" />
          </svg>
        </button>
        <button type="button" className="w-9 text-center text-xs">РУС</button>
        <button type="button" className="w-[66px] text-center text-[11px] leading-[18px]">
          13:19<br />22.03.2023
        </button>
        <button type="button" aria-label="Уведомления" className="flex w-10 justify-center">
          <svg viewBox="0 0 16 16" className="size-4" fill="none" stroke="#111" strokeWidth="1.200">
            <path d="M.6 1h14.800v11.400h-5L8 15l-2.400-2.600h-5z" />
          </svg>
        </button>
        <span className="ml-2 h-10 w-[5px] border-l border-[#b6bcc8]" />
      </div>
    </footer>
  );
}

export default function App() {
  return (
    <div className="flex h-screen flex-col overflow-hidden font-['Open_Sans','Noto_Sans',sans-serif]">
      <div className="relative flex min-h-0 flex-1 px-2 pt-[3px] pb-2">
        <Backdrop />
        <div className="relative flex min-w-0 flex-1 shadow-[0_0_4px_rgba(0,0,0,0.6)]">
          <Sidebar />
          <div className="flex min-w-0 flex-1 flex-col bg-[#33383a]">
            <TitleBar />
            <div className="flex min-h-0 flex-1 flex-col overflow-hidden rounded-t-lg bg-white">
              <Toolbar />
              <BookmarksBar />
              <Page />
            </div>
          </div>
        </div>
      </div>
      <Taskbar />
    </div>
  );
}
